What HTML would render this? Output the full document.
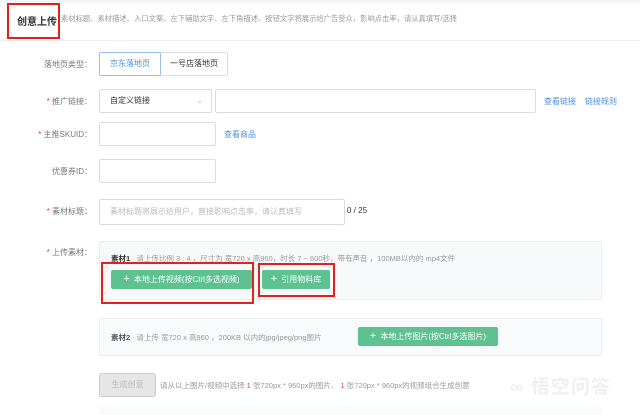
<!DOCTYPE html>
<html><head><meta charset="utf-8"><style>
*{margin:0;padding:0;box-sizing:border-box}
body{width:640px;height:415px;overflow:hidden;background:#fff;font-family:"Liberation Sans","Noto Sans CJK SC",sans-serif;font-size:8px;color:#666;position:relative}
.a{position:absolute;white-space:nowrap}
.lbl{position:absolute;width:92px;text-align:right;left:0;font-size:8px;color:#777}
.star{color:#e4393c}
.inp{position:absolute;border:1px solid #dcdcdc;border-radius:2px;background:#fff}
.link{position:absolute;color:#4a90e2;font-size:8px}
.g{position:absolute;background:#5dc190;color:#fff;border-radius:2px;font-size:8px;text-align:center;line-height:18px}
.g b{font-weight:normal;font-size:11px;margin-right:4px}
.red{position:absolute;border:2px solid #e5201b}
</style></head><body>
<div class="a" style="left:0;top:0;width:640px;height:3px;background:#f3f5f8"></div>
<div class="a" style="left:0;top:40px;width:640px;height:1px;background:#eceef0"></div>
<div class="a" style="left:17px;top:13px;font-size:10px;font-weight:bold;color:#333">创意上传</div>
<div class="a" style="left:61px;top:14px;font-size:7.3px;color:#999">素材标题、素材描述、入口文案、左下辅助文字、左下角描述、按钮文字将展示给广告受众，影响点击率，请认真填写/选择</div>
<div class="red" style="left:7px;top:3px;width:53px;height:36px"></div>

<div class="lbl" style="top:59px">落地页类型：</div>
<div class="inp" style="left:99px;top:52px;width:62px;height:24px;border-color:#9cbff0;z-index:2;color:#4a90e2;text-align:center;line-height:22px">京东落地页</div>
<div class="inp" style="left:160px;top:52px;width:68px;height:24px;color:#333;text-align:center;line-height:22px">一号店落地页</div>

<div class="lbl" style="top:96px"><span class="star">* </span>推广链接：</div>
<div class="inp" style="left:99px;top:89px;width:113px;height:24px;color:#333;line-height:22px;padding-left:10px">自定义链接<span style="position:absolute;right:8px;color:#bbb">⌄</span></div>
<div class="inp" style="left:215px;top:89px;width:321px;height:24px"></div>
<div class="link" style="left:544px;top:96px">查看链接</div>
<div class="link" style="left:585px;top:96px">链接规则</div>

<div class="lbl" style="top:129px"><span class="star">* </span>主推SKUID：</div>
<div class="inp" style="left:99px;top:122px;width:117px;height:24px"></div>
<div class="link" style="left:224px;top:129px">查看商品</div>

<div class="lbl" style="top:166px">优惠券ID：</div>
<div class="inp" style="left:99px;top:159px;width:117px;height:24px"></div>

<div class="lbl" style="top:206px"><span class="star">* </span>素材标题：</div>
<div class="inp" style="left:99px;top:199px;width:246px;height:26px;color:#bbb;line-height:24px;padding-left:10px">素材标题将展示给用户，直接影响点击率，请认真填写</div>
<div class="a" style="left:347px;top:206px;color:#333;font-size:8px">0 / 25</div>

<div class="lbl" style="top:247px"><span class="star">* </span>上传素材：</div>
<div class="a" style="left:99px;top:241px;width:503px;height:59px;background:#f7f9fb;border:1px solid #eceef0;border-radius:2px"></div>
<div class="a" style="left:111px;top:253px;font-size:7.5px;color:#999"><span style="color:#333;font-weight:bold">素材1</span>&nbsp;&nbsp; 请上传比例 3 : 4 ，尺寸为 宽720 x 高960，时长 7 ~ 600秒，带有声音 ，100MB以内的 mp4文件</div>
<div class="g" style="left:111px;top:270px;width:141px;height:19px"><b>+</b>本地上传视频(按Ctrl多选视频)</div>
<div class="g" style="left:262px;top:270px;width:68px;height:19px"><b>+</b>引用物料库</div>
<div class="red" style="left:101px;top:262px;width:153px;height:42px"></div>
<div class="red" style="left:258px;top:263px;width:77px;height:34px"></div>

<div class="a" style="left:99px;top:318px;width:503px;height:38px;background:#f9fafb;border:1px solid #eceef0;border-radius:2px"></div>
<div class="a" style="left:111px;top:332px;font-size:7.5px;color:#999"><span style="color:#555;font-weight:bold">素材2</span>&nbsp;&nbsp; 请上传 宽720 x 高960 ，200KB 以内的jpg/jpeg/png图片</div>
<div class="g" style="left:358px;top:327px;width:140px;height:19px"><b>+</b>本地上传图片(按Ctrl多选图片)</div>

<div class="a" style="left:99px;top:373px;width:57px;height:24px;background:#e6e6e6;border:1px solid #ccc;border-radius:3px;color:#bbb;text-align:center;line-height:22px">生成创意</div>
<div class="a" style="left:160px;top:380px;font-size:7.5px;color:#999">请从以上图片/视频中选择 <span class="star">1</span> 张720px * 960px的图片、 <span class="star">1</span> 张720px * 960px的视频组合生成创意</div>
<div class="a" style="left:510px;top:372px;font-size:19px;color:#f0f0f0;font-weight:bold;letter-spacing:1px">∞ 悟空问答</div>
<div class="a" style="left:99px;top:407px;width:503px;height:8px;background:#f9fafb"></div>
</body></html>
